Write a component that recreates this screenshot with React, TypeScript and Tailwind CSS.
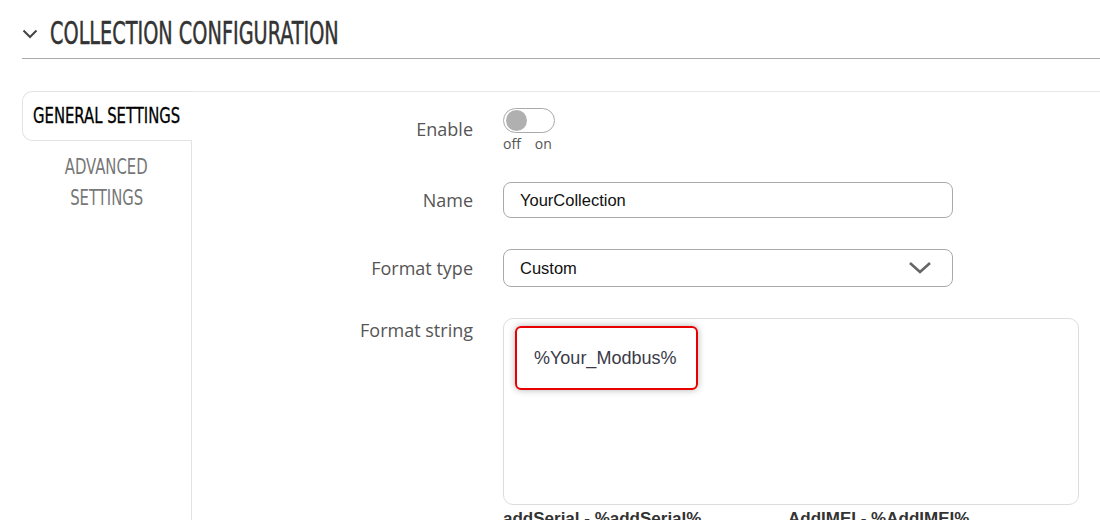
import React from "react";

const heading = { fontFamily: '"DejaVu Sans Condensed", "Liberation Sans", sans-serif' };
const labelFont = { fontFamily: '"Open Sans", "Noto Sans", sans-serif' };
const fieldFont = { fontFamily: '"Liberation Sans", Arial, sans-serif' };

function Row({ label, align = "center", labelPad = "", children }: { label: string; align?: "center" | "start"; labelPad?: string; children: React.ReactNode }) {
  return (
    <div className={`flex ${align === "center" ? "items-center" : "items-start"}`}>
      <div className={`w-[281px] shrink-0 text-right text-[18px] leading-[24px] text-[#555] ${labelPad}`} style={labelFont}>
        {label}
      </div>
      <div className="ml-[30px]">{children}</div>
    </div>
  );
}

export default function App() {
  return (
    <div className="w-[1100px] h-[520px] overflow-hidden bg-white">
      <div className="flex items-center pt-[9px] h-[59px] border-b border-[#aaa] ml-[22px]">
        <svg width="16" height="10" viewBox="0 0 16 10" className="mr-[12px] shrink-0">
          <path d="M1.5 1.5 L8 8 L14.5 1.5" fill="none" stroke="#444" strokeWidth="2" />
        </svg>
        <h1
          className="inline-block whitespace-nowrap origin-left scale-x-[0.68] text-[31.5px] leading-none text-[#333] [-webkit-text-stroke:0.5px_#333]"
          style={heading}
        >
          COLLECTION CONFIGURATION
        </h1>
      </div>

      <div className="flex ml-[22px] mt-[32px] h-[430px]">
        <div className="w-[170px] shrink-0 flex flex-col">
          <div className="h-[50px] border-t border-l border-b border-[#e3e3e3] rounded-l-[10px] flex items-center pl-[10px] text-black">
            <span className="inline-block whitespace-nowrap origin-left scale-x-[0.75] text-[22px] leading-none [-webkit-text-stroke:0.3px_#000]" style={heading}>
              GENERAL SETTINGS
            </span>
          </div>
          <div className="flex-1 border-r border-[#e3e3e3]">
            <div className="flex flex-col items-center pt-[10px] text-[22px] leading-[31px] text-[#777]" style={heading}>
              <span className="inline-block scale-x-[0.75]">ADVANCED</span>
              <span className="inline-block scale-x-[0.75]">SETTINGS</span>
            </div>
          </div>
        </div>

        <div className="flex-1 border-t border-[#e8e8e8]">
          <div className="mt-[16px]">
            <Row label="Enable" align="start" labelPad="pt-[9px]">
              <div>
                <div className="w-[52px] h-[25px] rounded-full border border-[#aaa] flex items-center pl-[2px]">
                  <div className="w-[21px] h-[21px] rounded-full bg-[#b0b0b0]" />
                </div>
                <div className="flex gap-[14px] text-[14px] leading-none mt-[4px] text-[#555]" style={labelFont}>
                  <span>off</span>
                  <span>on</span>
                </div>
              </div>
            </Row>
          </div>
          <div className="mt-[31px]">
            <Row label="Name">
              <div className="w-[450px] h-[36px] rounded-[8px] border border-[#aaa] flex items-center pl-[16px] text-[16.5px] text-[#111]" style={fieldFont}>
                YourCollection
              </div>
            </Row>
          </div>
          <div className="mt-[31px]">
            <Row label="Format type">
              <div className="w-[450px] h-[38px] rounded-[8px] border border-[#aaa] flex items-center justify-between pl-[16px] pr-[20px] text-[16.5px] text-[#111]" style={fieldFont}>
                <span>Custom</span>
                <svg width="24" height="14" viewBox="0 0 24 14">
                  <path d="M2 2 L12 11 L22 2" fill="none" stroke="#666" strokeWidth="2.6" />
                </svg>
              </div>
            </Row>
          </div>
          <div className="mt-[31px]">
            <Row label="Format string" align="start">
              <div className="w-[576px] h-[187px] rounded-[10px] border border-[#ddd] pt-[7px] pl-[11px]">
                <div className="w-[183px] h-[64px] rounded-[6px] border-2 border-[#e80000] shadow-[0_0_7px_rgba(0,0,0,0.3)] flex items-center pl-[17px] text-[18px] text-[#3a3a48]" style={fieldFont}>
                  %Your_Modbus%
                </div>
              </div>
              <div className="flex mt-[4px] text-[17px] leading-[20px] font-bold text-[#333]" style={fieldFont}>
                <span className="w-[285px]">addSerial - %addSerial%</span>
                <span>AddIMEI - %AddIMEI%</span>
              </div>
            </Row>
          </div>
        </div>
      </div>
    </div>
  );
}
